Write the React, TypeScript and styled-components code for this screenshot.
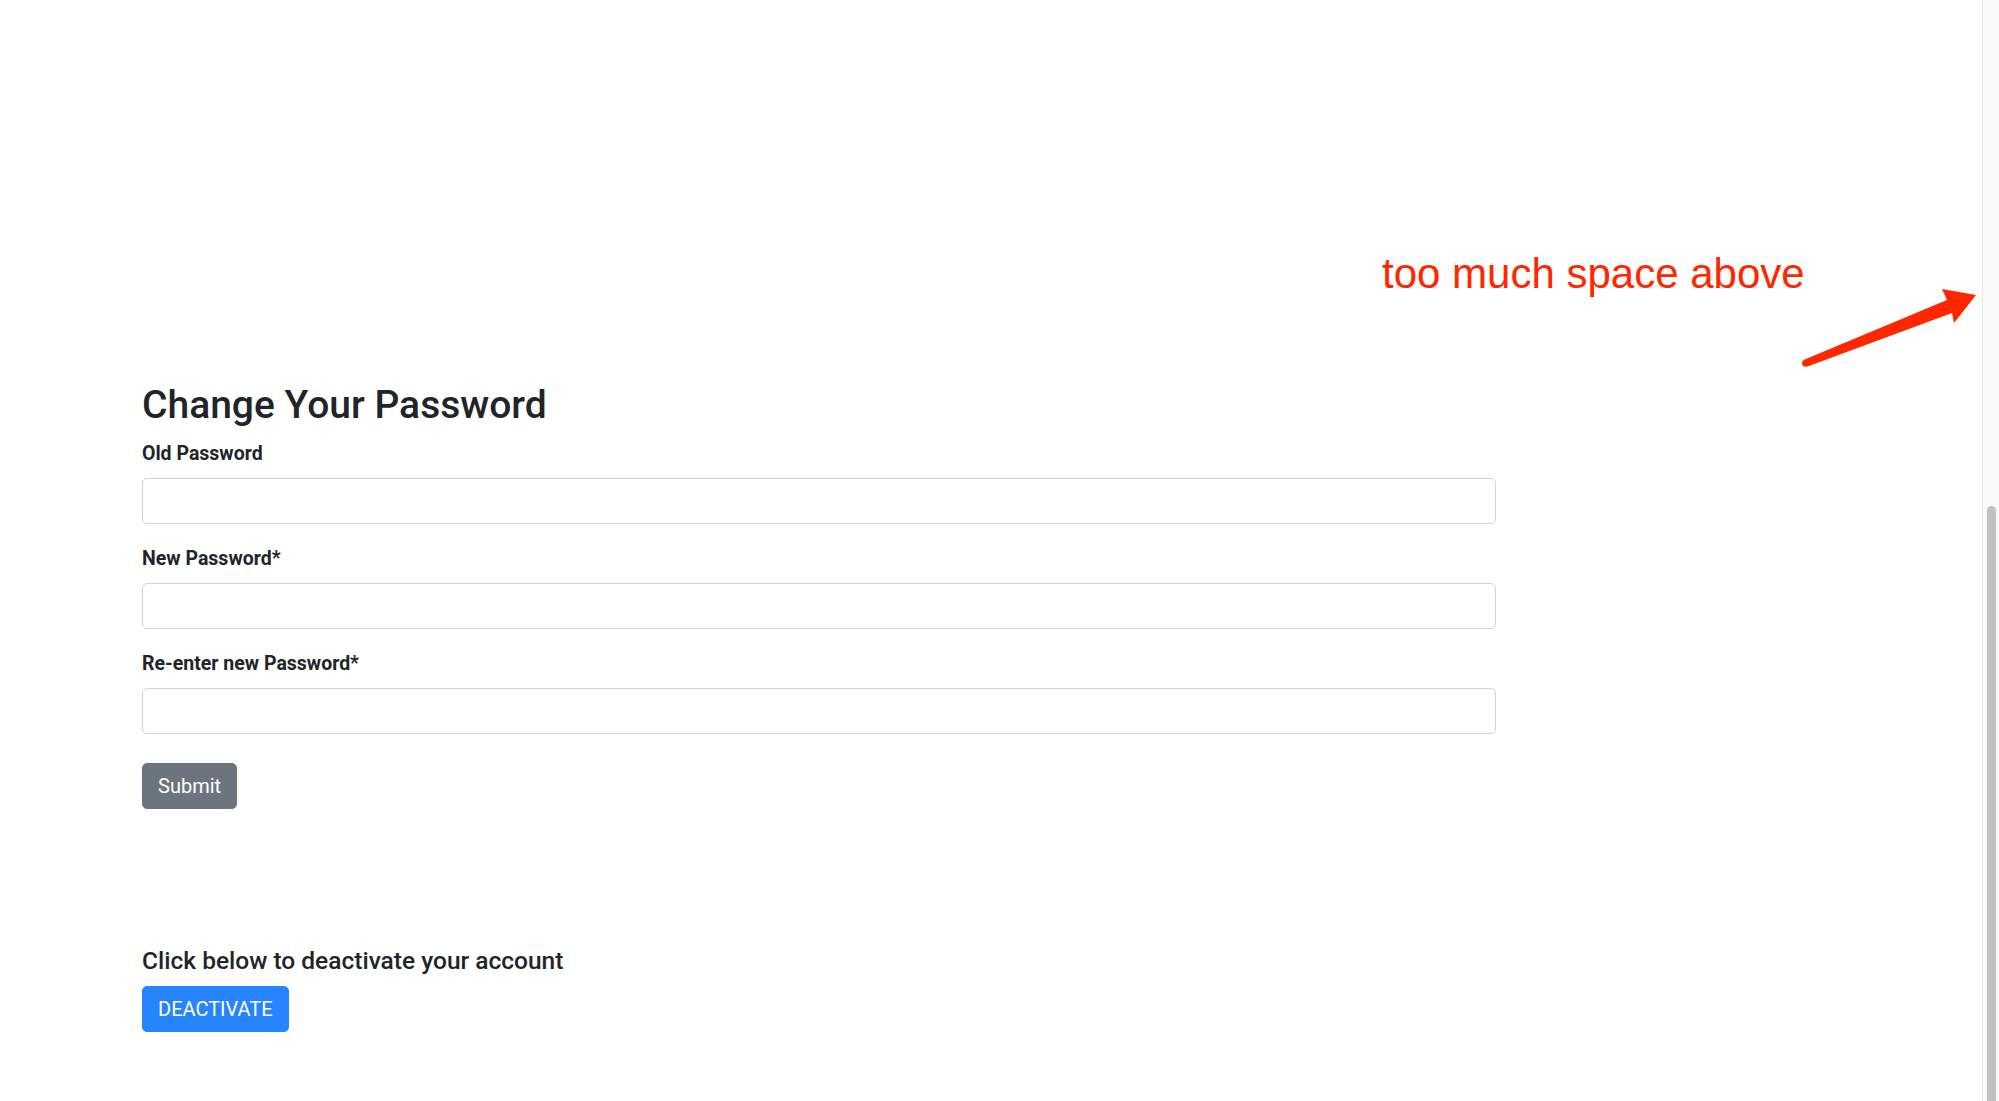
import React from "react";
import styled, { createGlobalStyle } from "styled-components";

const GlobalStyle = createGlobalStyle`
  html, body {
    margin: 0;
    padding: 0;
    background: #ffffff;
    overflow: hidden;
  }
  body {
    font-family: Roboto, "Liberation Sans", Arial, sans-serif;
    color: #212529;
  }
  * { box-sizing: border-box; }
`;

const Screen = styled.div`
  display: flex;
  width: 100vw;
  height: 100vh;
`;

const Main = styled.main`
  position: relative;
  flex: 1;
  padding: 381px 0 0 142px;
`;

const Content = styled.div`
  width: 1354px;
`;

const Title = styled.h2`
  margin: 0 0 10px;
  font-size: 39px;
  line-height: 48px;
  font-weight: 500;
  color: #212529;
`;

const Form = styled.form`
  display: flex;
  flex-direction: column;
  align-items: flex-start;
`;

const Field = styled.div`
  display: flex;
  flex-direction: column;
  width: 100%;
  margin-bottom: 20px;
`;

const Label = styled.label`
  font-size: 19.5px;
  line-height: 29px;
  font-weight: 700;
  margin-bottom: 10px;
  color: #212529;
`;

const Input = styled.input`
  width: 100%;
  height: 46px;
  padding: 7px 15px;
  font-size: 20px;
  font-family: inherit;
  color: #495057;
  background: #fff;
  border: 1px solid #ced4da;
  border-radius: 5px;
  outline: none;
`;

const Button = styled.button<{ $variant: "secondary" | "primary" }>`
  display: inline-block;
  padding: 7px 15px;
  font-family: Roboto, "Liberation Sans", Arial, sans-serif;
  font-size: 20px;
  line-height: 30px;
  font-weight: 400;
  color: #ffffff;
  background: ${(p) => (p.$variant === "primary" ? "#2684ff" : "#6c757d")};
  border: 1px solid ${(p) => (p.$variant === "primary" ? "#2684ff" : "#6c757d")};
  border-radius: 5px;
  cursor: pointer;
`;

const SubmitButton = styled(Button)`
  margin-top: 9px;
`;

const DeactivateSection = styled.section`
  margin-top: 137px;
`;

const SectionTitle = styled.h5`
  margin: 0 0 10px;
  font-size: 24.5px;
  line-height: 30px;
  font-weight: 500;
  color: #212529;
`;

const Annotation = styled.div`
  position: absolute;
  top: 253px;
  left: 1382px;
  font-family: "Liberation Sans", Arial, sans-serif;
  font-size: 42px;
  line-height: 42px;
  color: #ff2600;
  white-space: nowrap;
`;

const ArrowMark = styled.svg`
  position: absolute;
  left: 1795px;
  top: 280px;
  width: 190px;
  height: 95px;
  overflow: visible;
`;

const ScrollTrack = styled.div`
  display: flex;
  flex-direction: column;
  width: 17px;
  height: 100%;
  padding: 506px 3px 0 4px;
  background: #fafafa;
  border-left: 1px solid #e8e8e8;
`;

const ScrollThumb = styled.div`
  flex: 1;
  background: #c1c1c1;
  border-radius: 5px 5px 0 0;
`;

const fields = [
  { id: "old", label: "Old Password" },
  { id: "new", label: "New Password*" },
  { id: "confirm", label: "Re-enter new Password*" },
];

export default function App() {
  return (
    <>
      <GlobalStyle />
      <Screen>
        <Main>
          <Content>
            <Title>Change Your Password</Title>
            <Form onSubmit={(e) => e.preventDefault()}>
              {fields.map((f) => (
                <Field key={f.id}>
                  <Label htmlFor={f.id}>{f.label}</Label>
                  <Input id={f.id} type="password" />
                </Field>
              ))}
              <SubmitButton $variant="secondary" type="submit">
                Submit
              </SubmitButton>
            </Form>
            <DeactivateSection>
              <SectionTitle>Click below to deactivate your account</SectionTitle>
              <Button $variant="primary" type="button">
                DEACTIVATE
              </Button>
            </DeactivateSection>
          </Content>
          <Annotation>too much space above</Annotation>
          <ArrowMark viewBox="0 0 190 95">
            <polygon
              points="8.5,80 152,20 147,9 181,15 159,43 157,33 12.5,86.5"
              fill="#ff2600"
            />
            <circle cx="10.5" cy="83.3" r="3.4" fill="#ff2600" />
          </ArrowMark>
        </Main>
        <ScrollTrack>
          <ScrollThumb />
        </ScrollTrack>
      </Screen>
    </>
  );
}
